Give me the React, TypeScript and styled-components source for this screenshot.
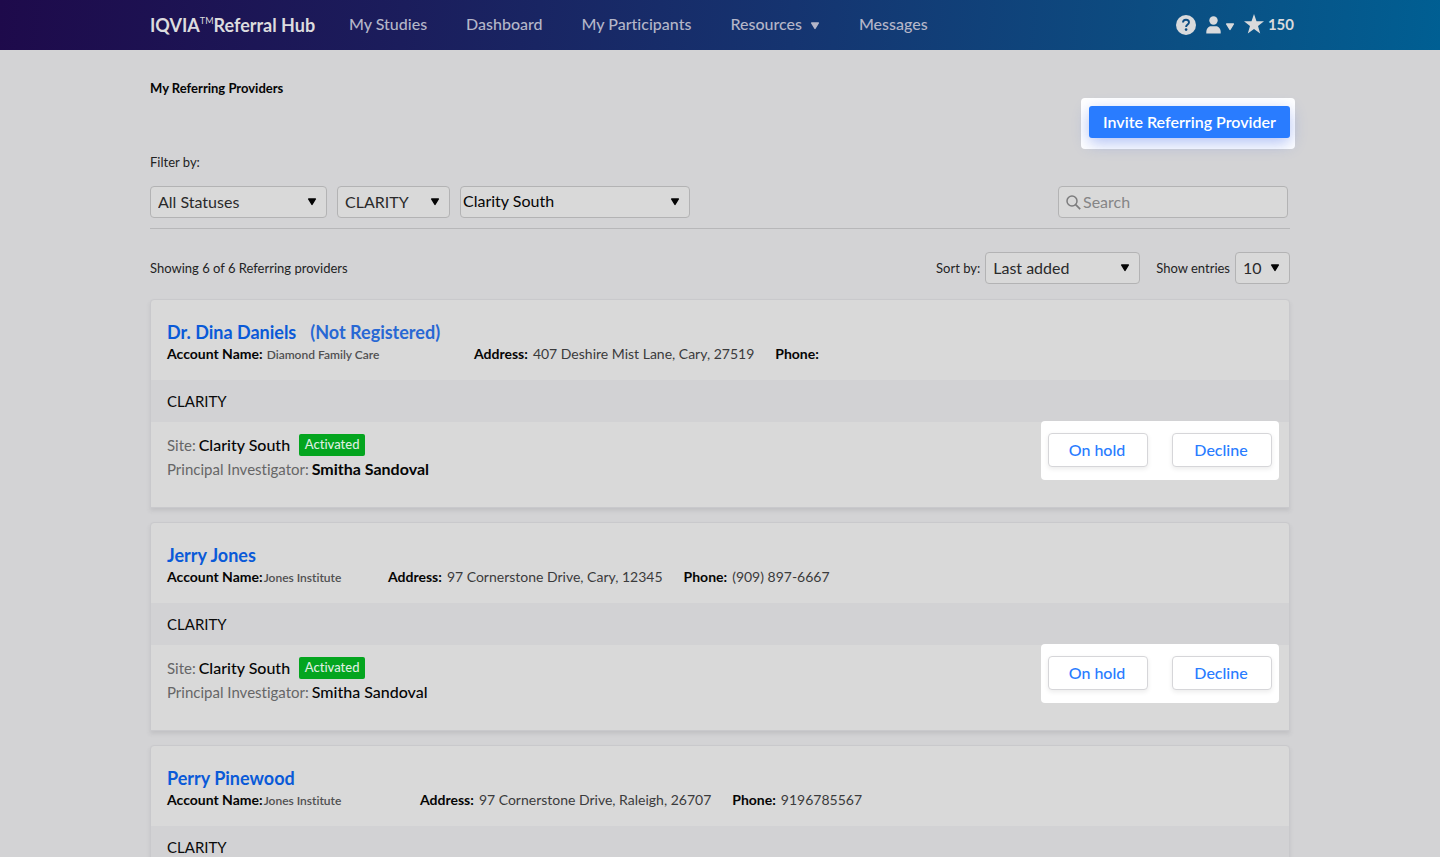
import React from 'react';
import styled, { createGlobalStyle } from 'styled-components';

const GlobalStyle = createGlobalStyle`
  *, *::before, *::after { box-sizing: border-box; }
  body { margin: 0; background: #d3d3d5; font-variant-ligatures: none; }
  body, button, input, select { font-family: Lato, "Open Sans", sans-serif; }
`;

const Shell = styled.div`
  height: 100vh;
  overflow: hidden;
  color: #232324;
  font-size: 13px;
  line-height: 20px;
`;

const Container = styled.div`
  width: 100%;
  max-width: 1140px;
  margin: 0 auto;
`;

/* ---------- top bar ---------- */

const TopBar = styled.header`
  background: linear-gradient(95deg, #1e0a4b 0%, #1b1d5c 28%, #153470 55%, #0b4f83 82%, #005f93 100%);
`;

const TopBarInner = styled(Container)`
  display: flex;
  align-items: center;
  height: 50px;
  padding-bottom: 2px;
`;

const Brand = styled.a`
  display: flex;
  align-items: center;
  width: 199px;
  padding-top: 2px;
  color: #dcdcde;
  font-size: 18px;
  font-weight: 700;
  line-height: 24px;
  text-decoration: none;
  white-space: nowrap;
`;

const Trademark = styled.span`
  align-self: flex-start;
  font-size: 9px;
  font-weight: 400;
  line-height: 16px;
`;

const Nav = styled.nav`
  display: flex;
  gap: 39px;
`;

const NavLink = styled.a`
  display: flex;
  align-items: center;
  gap: 8px;
  color: #b4b6c8;
  font-size: 16px;
  font-weight: 500;
  text-decoration: none;
  white-space: nowrap;

  svg { margin-top: 3px; }
`;

const Account = styled.div`
  display: flex;
  align-items: center;
  margin-left: auto;
  margin-right: -4px;
  color: #d9dadc;
`;

const IconButton = styled.button`
  display: flex;
  align-items: center;
  gap: 4px;
  margin-right: 9px;
  padding: 2px 0 0;
  border: 0;
  background: none;
  color: inherit;

  svg + svg { margin-top: 4px; }
`;

const Points = styled.span`
  display: flex;
  align-items: center;
  gap: 4px;
  font-size: 15px;
  font-weight: 700;
`;

/* ---------- page head ---------- */

const PageHead = styled.div`
  padding-top: 28px;
`;

const Title = styled.h1`
  margin: 0;
  color: #050505;
  font-size: 13px;
  font-weight: 700;
  line-height: 20px;
`;

const Highlight = styled.div`
  border-radius: 4px;
  background: #fff;
`;

const InviteHighlight = styled(Highlight)`
  width: fit-content;
  margin: 0 -5px 0 auto;
  padding: 8px 5px 11px 8px;
`;

const InviteButton = styled.button`
  display: block;
  width: 201px;
  height: 32px;
  padding: 0 0 2px;
  border: 0;
  border-radius: 3px;
  background: #297cff;
  box-shadow: 0 5px 16px rgba(60, 100, 230, 0.4);
  color: #fff;
  font-size: 16px;
  font-weight: 600;
`;

/* ---------- filters ---------- */

const FilterLabel = styled.div`
  margin-top: 3px;
`;

const Filters = styled.div`
  display: flex;
  gap: 10px;
  margin-top: 14px;
  padding-bottom: 10px;
  border-bottom: 1px solid #b7b7b9;
`;

const SelectBox = styled.span<{ $width: number }>`
  position: relative;
  width: ${(p) => p.$width}px;
  height: 32px;

  svg {
    position: absolute;
    top: 12px;
    right: 10px;
    color: #050505;
    pointer-events: none;
  }
`;

const Select = styled.select<{ $tight?: boolean }>`
  width: 100%;
  height: 100%;
  padding: 0 0 ${(p) => (p.$tight ? 4 : 2)}px ${(p) => (p.$tight ? 2 : 7)}px;
  border: 1px solid #b3b3b4;
  border-radius: 4px;
  appearance: none;
  background: #d9d9d9;
  color: ${(p) => (p.$tight ? '#050505' : '#2a2a2b')};
  font-size: 16px;
`;

const SearchBox = styled.label`
  display: flex;
  align-items: center;
  gap: 2px;
  width: 230px;
  height: 32px;
  margin: 0 2px 0 auto;
  padding: 0 7px;
  border: 1px solid #b3b3b4;
  border-radius: 4px;
  background: #d9d9d9;
  color: #7c7c7d;
`;

const SearchInput = styled.input`
  flex: 1;
  min-width: 0;
  padding: 0 0 2px;
  border: 0;
  outline: 0;
  background: none;
  font-size: 16px;

  &::placeholder { color: #858586; opacity: 1; }
`;

const ListBar = styled.div`
  display: flex;
  align-items: center;
  margin: 23px 0 15px;
`;

const Count = styled.span`
  margin-right: auto;
`;

const Field = styled.label`
  display: flex;
  align-items: center;
  gap: 5px;
  margin-left: 16px;
`;

/* ---------- provider cards ---------- */

const Cards = styled.div`
  display: flex;
  flex-direction: column;
  gap: 14px;
`;

const Card = styled.article`
  border: 1px solid #c9c9cc;
  border-radius: 4px 4px 0 0;
  background: #d9d9d9;
  box-shadow: 0 3px 4px rgba(70, 75, 85, 0.12);
`;

const CardHead = styled.div`
  height: 80px;
  padding: 20px 16px 0;
`;

const Name = styled.h2`
  display: flex;
  gap: 14px;
  margin: 0;
  font-size: 18px;
  font-weight: 700;
  line-height: 24px;

  a { color: #0a5ad8; text-decoration: none; }
  span { color: #2868d4; }
`;

const Details = styled.div`
  display: flex;
  font-size: 14px;
  line-height: 20px;
  white-space: nowrap;
`;

const AccountCell = styled.span<{ $width: number }>`
  width: ${(p) => p.$width}px;
`;

const DetailCell = styled.span`
  display: flex;
  gap: 5px;
  margin-right: 21px;
  color: #3b3b3c;
`;

const Label = styled.b`
  color: #050505;
  font-weight: 700;
`;

const AccountName = styled.span<{ $spaced?: boolean }>`
  margin-left: ${(p) => (p.$spaced ? 4 : 1)}px;
  color: #505051;
  font-size: 12px;
  font-weight: 600;
`;

const StudyBand = styled.div`
  height: 42px;
  padding: 0 16px;
  background: #d2d2d4;
  color: #0a0a0a;
  font-size: 15px;
  line-height: 42px;
`;

const CardBody = styled.div`
  display: flex;
  align-items: flex-start;
  justify-content: space-between;
  height: 85px;
  padding: 0 10px 0 16px;
`;

const SiteInfo = styled.div`
  padding-top: 11px;
  font-size: 15px;
  line-height: 24px;
`;

const SiteLine = styled.div`
  display: flex;
  align-items: center;
  gap: 3px;
  color: #666667;
`;

const Value = styled.span<{ $bold?: boolean }>`
  color: #050505;
  font-size: 16px;
  font-weight: ${(p) => (p.$bold ? 700 : 500)};
`;

const Badge = styled.span`
  width: 66px;
  height: 22px;
  margin-left: 6px;
  border-radius: 2px;
  background: #04a51f;
  color: #dfeee1;
  font-size: 13px;
  font-weight: 500;
  line-height: 21px;
  text-align: center;
`;

const Actions = styled(Highlight)`
  display: flex;
  gap: 24px;
  margin-top: -1px;
  padding: 12px 7px 13px;
`;

const ActionButton = styled.button`
  width: 100px;
  height: 34px;
  padding: 0 2px 2px 0;
  border: 1px solid #d6d6d9;
  border-radius: 4px;
  background: #fff;
  box-shadow: 0 2px 5px rgba(0, 0, 0, 0.08);
  color: #297cff;
  font-size: 16px;
  font-weight: 500;
`;

function Caret() {
  return (
    <svg width="10" height="8" viewBox="0 0 10 8" aria-hidden="true">
      <path
        d="M1.6 1h6.8L5 6.4z"
        fill="currentColor"
        stroke="currentColor"
        strokeWidth="1.4"
        strokeLinejoin="round"
      />
    </svg>
  );
}

function Dropdown(props: { id: string; label?: string; value: string; width: number; tight?: boolean }) {
  return (
    <SelectBox $width={props.width}>
      <Select id={props.id} aria-label={props.label} $tight={props.tight}>
        <option>{props.value}</option>
      </Select>
      <Caret />
    </SelectBox>
  );
}

interface Provider {
  name: string;
  note?: string;
  account: string;
  accountWidth: number;
  address: string;
  phone: string;
  study: string;
  site?: string;
  investigator?: string;
}

const providers: Provider[] = [
  {
    name: 'Dr. Dina Daniels',
    note: '(Not Registered)',
    account: 'Diamond Family Care',
    accountWidth: 307,
    address: '407 Deshire Mist Lane, Cary, 27519',
    phone: '',
    study: 'CLARITY',
    site: 'Clarity South',
    investigator: 'Smitha Sandoval',
  },
  {
    name: 'Jerry Jones',
    account: 'Jones Institute',
    accountWidth: 221,
    address: '97 Cornerstone Drive, Cary, 12345',
    phone: '(909) 897-6667',
    study: 'CLARITY',
    site: 'Clarity South',
    investigator: 'Smitha Sandoval',
  },
  {
    name: 'Perry Pinewood',
    account: 'Jones Institute',
    accountWidth: 253,
    address: '97 Cornerstone Drive, Raleigh, 26707',
    phone: '9196785567',
    study: 'CLARITY',
  },
];

function ProviderCard({ p }: { p: Provider }) {
  return (
    <Card>
      <CardHead>
        <Name>
          <a href="#provider">{p.name}</a>
          {p.note && <span>{p.note}</span>}
        </Name>
        <Details>
          <AccountCell $width={p.accountWidth}>
            <Label>Account Name:</Label>
            <AccountName $spaced={!!p.note}>{p.account}</AccountName>
          </AccountCell>
          <DetailCell>
            <Label>Address:</Label>
            {p.address}
          </DetailCell>
          <DetailCell>
            <Label>Phone:</Label>
            {p.phone}
          </DetailCell>
        </Details>
      </CardHead>
      <StudyBand>{p.study}</StudyBand>
      {p.site && (
        <CardBody>
          <SiteInfo>
            <SiteLine>
              Site: <Value>{p.site}</Value>
              <Badge>Activated</Badge>
            </SiteLine>
            <SiteLine>
              Principal Investigator: <Value $bold={!!p.note}>{p.investigator}</Value>
            </SiteLine>
          </SiteInfo>
          <Actions>
            <ActionButton>On hold</ActionButton>
            <ActionButton>Decline</ActionButton>
          </Actions>
        </CardBody>
      )}
    </Card>
  );
}

export default function App() {
  return (
    <Shell>
      <GlobalStyle />
      <TopBar>
        <TopBarInner>
          <Brand href="#home">
            IQVIA<Trademark>TM</Trademark>Referral Hub
          </Brand>
          <Nav>
            <NavLink href="#studies">My Studies</NavLink>
            <NavLink href="#dashboard">Dashboard</NavLink>
            <NavLink href="#participants">My Participants</NavLink>
            <NavLink href="#resources">
              Resources <Caret />
            </NavLink>
            <NavLink href="#messages">Messages</NavLink>
          </Nav>
          <Account>
            <IconButton aria-label="Help">
              <svg width="22" height="22" viewBox="0 0 22 22" aria-hidden="true">
                <circle cx="11" cy="11" r="10" fill="currentColor" />
                <path
                  d="M8 8.6c0-1.8 1.3-2.9 3-2.9s3 1.1 3 2.6c0 1.3-.8 1.9-1.6 2.5-.8.6-1.3 1-1.3 2.1"
                  fill="none"
                  stroke="#0d4c82"
                  strokeWidth="1.9"
                />
                <circle cx="11.1" cy="15.6" r="1.3" fill="#0d4c82" />
              </svg>
            </IconButton>
            <IconButton aria-label="Account menu">
              <svg width="15" height="18" viewBox="0 0 15 18" aria-hidden="true">
                <circle cx="7.500" cy="4.500" r="4.200" fill="currentColor" />
                <path d="M.3 17.600v-1.600c0-3.200 2.200-5.800 4.600-5.800h5.200c2.400 0 4.600 2.600 4.600 5.800v1.600z" fill="currentColor" />
              </svg>
              <Caret />
            </IconButton>
            <Points>
              <svg width="20" height="20" viewBox="0 0 20 20" aria-hidden="true">
                <path
                  d="M10 0l2.500 7.300h7.500l-6 4.600 2.200 7.600L10 15l-6.200 4.500L6 11.900 0 7.300h7.500z"
                  fill="currentColor"
                />
              </svg>
              150
            </Points>
          </Account>
        </TopBarInner>
      </TopBar>

      <Container as="main">
        <PageHead>
          <Title>My Referring Providers</Title>
          <InviteHighlight>
            <InviteButton>Invite Referring Provider</InviteButton>
          </InviteHighlight>
        </PageHead>

        <FilterLabel>Filter by:</FilterLabel>
        <Filters>
          <Dropdown id="status" label="Status" value="All Statuses" width={177} />
          <Dropdown id="study" label="Study" value="CLARITY" width={113} />
          <Dropdown id="site" label="Site" value="Clarity South" width={230} tight />
          <SearchBox>
            <svg width="15" height="15" viewBox="0 0 15 15" fill="none" stroke="currentColor" aria-hidden="true">
              <circle cx="6" cy="6" r="5" strokeWidth="1.5" />
              <path d="M9.600 9.600l4.600 4.600" strokeWidth="1.700" />
            </svg>
            <SearchInput type="search" placeholder="Search" aria-label="Search" />
          </SearchBox>
        </Filters>

        <ListBar>
          <Count>Showing 6 of 6 Referring providers</Count>
          <Field htmlFor="sort">
            Sort by:
            <Dropdown id="sort" value="Last added" width={155} />
          </Field>
          <Field htmlFor="entries">
            Show entries
            <Dropdown id="entries" value="10" width={55} />
          </Field>
        </ListBar>

        <Cards>
          {providers.map((p) => (
            <ProviderCard key={p.name} p={p} />
          ))}
        </Cards>
      </Container>
    </Shell>
  );
}
